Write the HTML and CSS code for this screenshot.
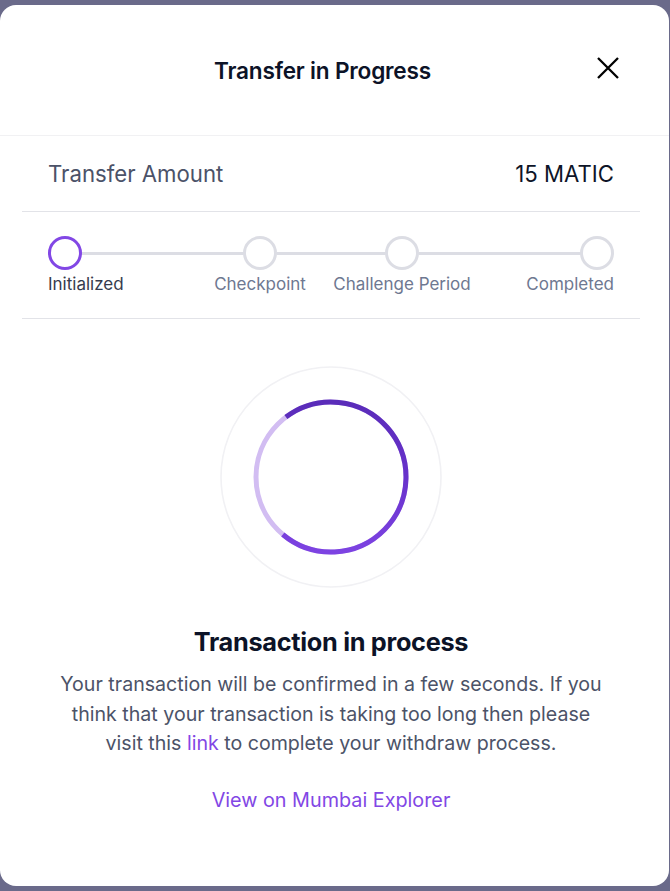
FILE: index.html
```html
<!DOCTYPE html>
<html lang="en">
<head>
<meta charset="utf-8">
<title>Transfer in Progress</title>
<link rel="stylesheet" href="styles.css">
</head>
<body>
<div class="modal">
  <header class="modal-header">
    <h1 class="modal-title">Transfer in Progress</h1>
    <button class="close-btn" aria-label="Close">
      <svg width="22" height="22" viewBox="0 0 22 22"><path d="M1 1 L21 21 M21 1 L1 21" stroke="#000" stroke-width="2.3" fill="none"/></svg>
    </button>
  </header>
  <div class="modal-body">
    <div class="amount-row">
      <span class="amount-label">Transfer Amount</span>
      <span class="amount-value">15 MATIC</span>
    </div>
    <div class="stepper">
      <div class="step-dot active"></div>
      <div class="step-line"></div>
      <div class="step-dot"></div>
      <div class="step-line"></div>
      <div class="step-dot"></div>
      <div class="step-line"></div>
      <div class="step-dot"></div>
      <div class="step-label start active"><span>Initialized</span></div>
      <div class="step-label center c3"><span>Checkpoint</span></div>
      <div class="step-label center c5"><span>Challenge Period</span></div>
      <div class="step-label end"><span>Completed</span></div>
    </div>
    <div class="status">
      <div class="spinner">
        <svg width="222" height="222" viewBox="0 0 222 222">
          <defs>
            <linearGradient id="arc" x1="0" y1="0" x2="0" y2="1">
              <stop offset="0" stop-color="#5a2cb9"/>
              <stop offset="0.5" stop-color="#6832cb"/>
              <stop offset="1" stop-color="#7d43e2"/>
            </linearGradient>
          </defs>
          <circle cx="111" cy="111" r="110" fill="none" stroke="#f1f1f4" stroke-width="1.6"/>
          <circle cx="111" cy="111" r="75" fill="none" stroke="#d2bdf2" stroke-width="5"/>
          <path d="M65.9 51.1 A75 75 0 1 1 62.8 168.5" fill="none" stroke="url(#arc)" stroke-width="5"/>
        </svg>
      </div>
      <h2 class="status-title">Transaction in process</h2>
      <p class="status-text">Your transaction will be confirmed in a few seconds. If you think that your transaction is taking too long then please visit this <a href="#" class="link">link</a> to complete your withdraw process.</p>
      <a href="#" class="explorer-link">View on Mumbai Explorer</a>
    </div>
  </div>
</div>
</body>
</html>
```
FILE: styles.css
```css
* { box-sizing: border-box; }
html, body { margin: 0; padding: 0; }
body {
  background: #6a6a8a;
  font-family: Inter, "Noto Sans", sans-serif;
  width: 670px;
  height: 891px;
  overflow: hidden;
  padding-top: 5px;
}
.modal {
  width: 669px;
  height: 881px;
  background: #fff;
  border-radius: 16px;
}
.modal-header {
  height: 131px;
  display: flex;
  align-items: center;
  padding: 0 50px 0 48px;
  border-bottom: 1px solid #f1f1f3;
}
.modal-title {
  flex: 1;
  margin: 0;
  text-align: center;
  font-size: 22.6px;
  font-weight: 600;
  color: #0c1327;
  letter-spacing: -0.2px;
}
.close-btn {
  width: 22px;
  height: 22px;
  padding: 0;
  border: 0;
  background: none;
  display: flex;
  margin-top: -5px;
}
.modal-body {
  padding: 0 29px 0 22px;
}
.amount-row {
  height: 76px;
  display: flex;
  align-items: center;
  justify-content: space-between;
  padding: 0 26px;
  border-bottom: 1px solid #e2e3e8;
  font-size: 22.2px;
}
.amount-label { color: #4b5268; }
.amount-value { color: #0d1427; }
.stepper {
  display: grid;
  grid-template-columns: 34px 161fr 34px 108fr 34px 161fr 34px;
  grid-template-rows: 34px auto;
  align-items: center;
  row-gap: 4px;
  padding: 24px 26px 23px;
  border-bottom: 1px solid #e2e3e8;
}
.step-dot {
  width: 34px;
  height: 34px;
  border-radius: 50%;
  border: 3px solid #dcdde4;
}
.step-dot.active { border-color: #8247e5; }
.step-line {
  height: 3px;
  background: #dcdde4;
}
.step-label {
  display: flex;
  white-space: nowrap;
  font-size: 17px;
  line-height: 21px;
  color: #6e7891;
  grid-row: 2;
}
.step-label.start { grid-column: 1; justify-content: flex-start; color: #363b4e; }
.step-label.center { justify-content: center; }
.step-label.c3 { grid-column: 3; }
.step-label.c5 { grid-column: 5; }
.step-label.end { grid-column: 7; justify-content: flex-end; }
.status {
  display: flex;
  flex-direction: column;
  align-items: center;
  text-align: center;
  padding-top: 47px;
}
.spinner { display: flex; }
.status-title {
  margin: 38px 0 0;
  font-size: 25.3px;
  line-height: 32px;
  font-weight: 700;
  color: #0c1327;
  letter-spacing: -0.3px;
}
.status-text {
  margin: 12px 0 0;
  width: 560px;
  font-size: 19.6px;
  line-height: 29.5px;
  color: #4c5368;
}
.link { color: #8247e5; text-decoration: none; }
.explorer-link {
  margin-top: 26px;
  font-size: 19.8px;
  line-height: 30px;
  color: #8247e5;
  text-decoration: none;
}
```
